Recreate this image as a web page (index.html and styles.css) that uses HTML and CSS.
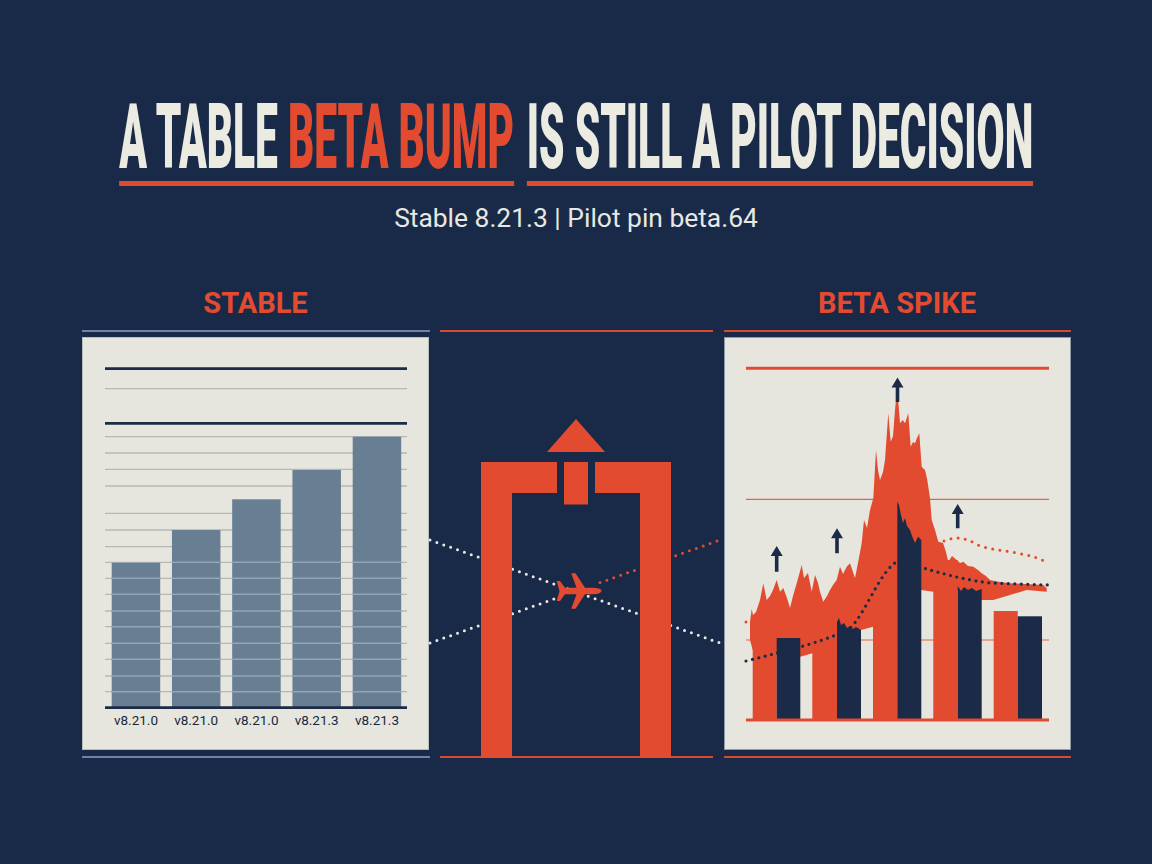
FILE: index.html
```html
<!DOCTYPE html>
<html lang="en">
<head>
<meta charset="utf-8">
<title>A Table Beta Bump Is Still a Pilot Decision</title>
<link rel="stylesheet" href="styles.css">
</head>
<body>
<div class="page">
  <header class="hero">
    <h1 class="title"><span class="title-inner"><span class="seg">A TABLE <span class="hot">BETA BUMP</span></span> <span class="seg">IS STILL A PILOT DECISION</span></span></h1>
    <p class="subtitle">Stable 8.21.3 | Pilot pin beta.64</p>
  </header>

  <main class="panels">
    <section class="panel">
      <h2 class="label">STABLE</h2>
      <div class="rule"></div>
      <div class="card card-stable">
        <svg class="chart" viewBox="82 337 347 413" width="347" height="413">
          <defs>
            <clipPath id="barClip">
              <rect x="111.7" y="562.7" width="48.5" height="145"/>
              <rect x="171.95" y="530" width="48.5" height="178"/>
              <rect x="232.2" y="499.3" width="48.5" height="209"/>
              <rect x="292.45" y="470" width="48.5" height="238"/>
              <rect x="352.7" y="436.7" width="48.5" height="271"/>
            </clipPath>
          </defs>
          <g class="grid-light">
            <line x1="105" x2="407" y1="388.7" y2="388.7"/>
            <line x1="105" x2="407" y1="436.7" y2="436.7"/>
            <line x1="105" x2="407" y1="453" y2="453"/>
            <line x1="105" x2="407" y1="469.3" y2="469.3"/>
            <line x1="105" x2="407" y1="486" y2="486"/>
            <line x1="105" x2="407" y1="513.3" y2="513.3"/>
            <line x1="105" x2="407" y1="530" y2="530"/>
            <line x1="105" x2="407" y1="546.7" y2="546.7"/>
            <line x1="105" x2="407" y1="562.3" y2="562.3"/>
            <line x1="105" x2="407" y1="578.3" y2="578.3"/>
            <line x1="105" x2="407" y1="594.3" y2="594.3"/>
            <line x1="105" x2="407" y1="611" y2="611"/>
            <line x1="105" x2="407" y1="626.7" y2="626.7"/>
            <line x1="105" x2="407" y1="643.3" y2="643.3"/>
            <line x1="105" x2="407" y1="659.3" y2="659.3"/>
            <line x1="105" x2="407" y1="676" y2="676"/>
            <line x1="105" x2="407" y1="691.7" y2="691.7"/>
          </g>
          <g class="grid-dark">
            <line x1="105" x2="407" y1="368.7" y2="368.7"/>
            <line x1="105" x2="407" y1="423.3" y2="423.3"/>
          </g>
          <g class="bars-stable">
            <rect x="111.7" y="562.7" width="48.5" height="145"/>
            <rect x="171.95" y="530" width="48.5" height="178"/>
            <rect x="232.2" y="499.3" width="48.5" height="209"/>
            <rect x="292.45" y="470" width="48.5" height="238"/>
            <rect x="352.7" y="436.7" width="48.5" height="271"/>
          </g>
          <g class="grid-on-bars" clip-path="url(#barClip)">
            <line x1="105" x2="407" y1="562.3" y2="562.3"/>
            <line x1="105" x2="407" y1="578.3" y2="578.3"/>
            <line x1="105" x2="407" y1="594.3" y2="594.3"/>
            <line x1="105" x2="407" y1="611" y2="611"/>
            <line x1="105" x2="407" y1="626.7" y2="626.7"/>
            <line x1="105" x2="407" y1="643.3" y2="643.3"/>
            <line x1="105" x2="407" y1="659.3" y2="659.3"/>
            <line x1="105" x2="407" y1="676" y2="676"/>
            <line x1="105" x2="407" y1="691.7" y2="691.7"/>
          </g>
          <line class="axis-dark" x1="105" x2="407" y1="707.7" y2="707.7"/>
          <g class="ticks">
            <text x="136" y="724.8">v8.21.0</text>
            <text x="196.2" y="724.8">v8.21.0</text>
            <text x="256.5" y="724.8">v8.21.0</text>
            <text x="316.7" y="724.8">v8.21.3</text>
            <text x="377" y="724.8">v8.21.3</text>
          </g>
        </svg>
      </div>
      <div class="rule"></div>
    </section>

    <section class="panel panel-gate">
      <div class="label label-empty"></div>
      <div class="rule rule-hot rule-inset"></div>
      <div class="stage">
        <svg class="gate" viewBox="430 337 294 413" width="294" height="413">
          <line class="dots dots-light" x1="430" y1="540" x2="720" y2="643"/>
          <line class="dots dots-light" x1="430" y1="643" x2="560" y2="596.8"/>
          <line class="dots dots-hot" x1="600" y1="582.6" x2="720" y2="540"/>
          <g class="gate-shape">
            <polygon points="576,419 547,452 605,452"/>
            <polygon points="481,462 557,462 557,493 512,493 512,758 481,758"/>
            <rect x="564" y="462" width="24" height="42.5"/>
            <polygon points="595,462 671,462 671,758 640,758 640,493 595,493"/>
            <path transform="translate(579,591)" d="M22.7 0 C21.5 -2.6 18.5 -3.2 14.5 -3.2 L6 -3.2 L-3.5 -17.7 L-7.8 -17.7 L-2.5 -3.2 L-14 -3.2 L-19 -10 L-22.3 -10 L-19.5 0 L-22.3 10 L-19 10 L-14 3.2 L-2.5 3.2 L-7.8 17.7 L-3.5 17.7 L6 3.2 L14.5 3.2 C18.5 3.2 21.5 2.6 22.7 0 Z"/>
          </g>
        </svg>
      </div>
      <div class="rule rule-hot rule-inset"></div>
    </section>

    <section class="panel">
      <h2 class="label">BETA SPIKE</h2>
      <div class="rule rule-hot"></div>
      <div class="card card-beta">
        <svg class="chart" viewBox="724 337 347 413" width="347" height="413">
          <line class="hot-thick" x1="746" x2="1049" y1="368.3" y2="368.3"/>
          <line class="hot-thin" x1="746" x2="1049" y1="499.3" y2="499.3"/>
          <line class="hot-thin" x1="746" x2="1049" y1="640" y2="640"/>
          <polygon class="area" points="750,621.7 751.7,609 753,615 756,612 760,600 763.3,583.3 766.7,600 770,596 773,590 776.7,580 780,591.7 783.3,588 787,598 790,608 793,596 796.7,583.3 799,575 801.7,565 804,578 808,573 811.7,591.7 815,575 818,583 820,591.7 823.3,601.7 827,596 830,590 833,585 836.7,580 840,566.7 843,574 846.7,566.7 850,563.3 853,572 855,578 858,563 861.7,543 864,520 867,528 870,510 873.3,498.3 876,450 878,470 880,480 883,472 885,460 888.3,413.3 890.7,441.7 893,436 895,410 896,400 898,398 900,423.3 902.7,420 905,423.3 908.3,413.3 910.7,446.7 913,442 915,443.3 917,438 919.3,433.3 921.7,466.7 925,470 927.3,480 930,498.3 931.7,520 935,530 938.3,541.7 943,543 946,552 948.3,561.7 952,556 956.7,560 960,563 963.3,561.7 968,566 973.3,566.7 978,570 981.7,573.3 986,576 990,580 1000,582 1010,583.3 1025,584 1043.3,585 1046.7,588.3 1046.7,591.7 1026.7,590 1010,595 993.3,600 981.7,600 956.7,590 933.3,591.7 921.3,590 897,600 873,626.7 861,630 837,633 812.3,653.3 800.3,656.7 776.7,655 752.7,650 750,640"/>
          <g class="bars-hot">
            <rect x="752.7" y="615" width="24" height="105"/>
            <rect x="812.3" y="620" width="24.7" height="100"/>
            <rect x="873" y="540" width="24.3" height="180"/>
            <rect x="933.3" y="560" width="24.4" height="160"/>
            <rect x="993.7" y="611" width="24" height="109"/>
          </g>
          <g class="bars-navy">
            <rect x="776.7" y="638" width="23.6" height="82"/>
            <polygon points="837,720 837,622 839,618 841,625 844,623 847,628 850,626 853,629 856,627 861,630 861,720"/>
            <polygon points="897.3,720 897.3,501.7 899,505 901,515 903,523 905,518 907,526 910,530 912,536 915,543 918,536.7 921.3,540 921.3,720"/>
            <polygon points="957.7,720 957.7,586 961,591 964,587 968,590 972,588 976,591 981.7,589 981.7,720"/>
            <rect x="1017.7" y="616.3" width="24.3" height="103.7"/>
          </g>
          <line class="hot-base" x1="746" x2="1049" y1="720" y2="720"/>
          <path class="dots dots-navy" d="M746 661 C790 650 830 640 850 628 C865 615 880 570 898 561 C920 566 950 578 990 583 L1048 585"/>
          <path class="dots dots-hot" d="M944 541 C955 536 965 537 980 546 C1000 552 1030 552 1048 563"/>
          <circle class="dot-hot" cx="746" cy="622" r="1.5"/>
          <g class="arrows">
            <path d="M776.7 546 L782.7 556 L778.5 556 L778.5 571.7 L774.9 571.7 L774.9 556 L770.7 556 Z"/>
            <path d="M837 528.3 L843 538.3 L838.8 538.3 L838.8 553.3 L835.2 553.3 L835.2 538.3 L831 538.3 Z"/>
            <path d="M957.7 504 L963.7 514 L959.5 514 L959.5 528.3 L955.9 528.3 L955.9 514 L951.7 514 Z"/>
            <path d="M897.5 377.5 L903.5 387.5 L899.3 387.5 L899.3 402 L895.7 402 L895.7 387.5 L891.5 387.5 Z"/>
          </g>
        </svg>
      </div>
      <div class="rule rule-hot"></div>
    </section>
  </main>
</div>
</body>
</html>
```

FILE: styles.css
```css
* {
  box-sizing: border-box;
}

html,
body {
  margin: 0;
  padding: 0;
}

body {
  width: 1152px;
  height: 864px;
  overflow: hidden;
  background: #182a48;
  color: #ecebe2;
  font-family: "Roboto", "Liberation Sans", sans-serif;
}

.page {
  width: 1152px;
  height: 864px;
  overflow: hidden;
}

.hero {
  display: flex;
  flex-direction: column;
  align-items: center;
  padding-top: 94px;
}

.title {
  margin: 0;
  width: 100%;
  display: flex;
  justify-content: center;
  font-family: "Roboto", "Liberation Sans", sans-serif;
  font-weight: 900;
  font-size: 90px;
  line-height: 0.97;
  white-space: nowrap;
  color: #ecebe2;
}

.title-inner {
  display: inline-block;
  flex: none;
  transform: scaleX(0.452);
  transform-origin: center top;
  word-spacing: 6px;
}

.seg {
  display: inline-block;
  border-bottom: 5px solid #e04a2e;
  word-spacing: 0;
}

.hot {
  color: #e24b2f;
}

.subtitle {
  margin: 17px 0 0;
  font-size: 26.4px;
  line-height: 31px;
  font-weight: 400;
  color: #e8e8e2;
}

.panels {
  display: grid;
  grid-template-columns: 348px 294px 347px;
  justify-content: center;
  margin-top: 55px;
}

.panel {
  display: flex;
  flex-direction: column;
}

.label {
  margin: 0 0 12px;
  height: 29px;
  font-size: 29px;
  line-height: 29px;
  font-weight: 700;
  color: #e24b2f;
  text-align: center;
}

.rule {
  height: 2px;
  background: #6a86a2;
}

.rule-hot {
  background: #d9492e;
}

.rule-inset {
  margin-left: 10px;
  margin-right: 11px;
}

.card {
  margin: 5px 0 6px;
  width: 347px;
  height: 413px;
  background: #e6e6de;
  border: 1px solid #b9bdbd;
  overflow: hidden;
}

.card-beta {
  border-color: #8d9aa8;
}

.card .chart {
  display: block;
  margin: -1px;
}

.stage {
  margin: 5px 0 6px;
  height: 413px;
  position: relative;
  z-index: 1;
}

.gate {
  display: block;
  overflow: visible;
}

.grid-light line {
  stroke: #b4b9b6;
  stroke-width: 1.3;
}

.grid-dark line,
.axis-dark {
  stroke: #1c2b46;
  stroke-width: 2.8;
}

.bars-stable rect {
  fill: #687e93;
}

.grid-on-bars line {
  stroke: #93a5b4;
  stroke-width: 1.4;
}

.ticks text {
  font-family: "Roboto", "Liberation Sans", sans-serif;
  font-size: 13.5px;
  font-weight: 400;
  fill: #1a263b;
  text-anchor: middle;
}

.dots {
  fill: none;
  stroke-width: 3;
  stroke-linecap: round;
  stroke-dasharray: 0 7.3;
}

.dots-light {
  stroke: #e9e9e1;
}

.dots-hot {
  stroke: #e24b2f;
}

.dots-navy {
  stroke: #1c2b46;
  stroke-width: 3.2;
  stroke-dasharray: 0 6.5;
}

.dot-hot {
  fill: #e24b2f;
}

.gate-shape polygon,
.gate-shape rect,
.gate-shape path {
  fill: #e24b2f;
}

.hot-thick {
  stroke: #e24b2f;
  stroke-width: 3;
}

.hot-thin {
  stroke: #e2644b;
  stroke-width: 1.2;
}

.hot-base {
  stroke: #e24b2f;
  stroke-width: 3;
}

.area {
  fill: #e24b2f;
}

.bars-hot rect {
  fill: #e24b2f;
}

.bars-navy rect,
.bars-navy polygon {
  fill: #1b2a47;
}

.arrows path {
  fill: #1b2a47;
}
```
